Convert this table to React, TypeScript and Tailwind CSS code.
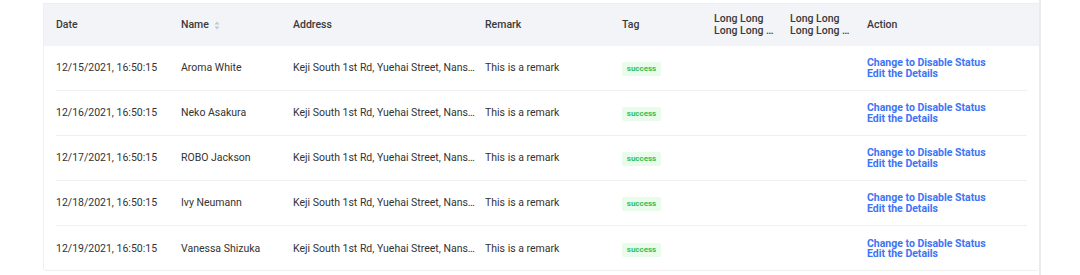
const rows = [
  { date: "12/15/2021, 16:50:15", name: "Aroma White" },
  { date: "12/16/2021, 16:50:15", name: "Neko Asakura" },
  { date: "12/17/2021, 16:50:15", name: "ROBO Jackson" },
  { date: "12/18/2021, 16:50:15", name: "Ivy Neumann" },
  { date: "12/19/2021, 16:50:15", name: "Vanessa Shizuka" },
];

const SortIcon = () => (
  <svg width="6" height="9" viewBox="0 0 6 9" className="ml-[5px]">
    <path d="M3 0.5 L5.5 3.5 L0.5 3.5 Z" fill="#c4c7cf" />
    <path d="M3 8.5 L5.5 5.5 L0.5 5.5 Z" fill="#c4c7cf" />
  </svg>
);

export default function App() {
  return (
    <div
      className="w-[1080px] h-[275px] bg-white pl-[43px] text-[10.5px] text-[#333]"
      style={{ fontFamily: "Roboto, 'Liberation Sans', sans-serif" }}
    >
      <div className="w-[998px] h-full border-r-2 border-[#ebebeb] pt-[3px]">
        <div className="h-[268px] border border-r-0 border-[#efefef] rounded-b-[4px] bg-white">
          {/* header */}
          <div className="h-[42px] bg-[#f3f4f7] flex items-center px-[12px] font-medium text-[#3a3a3a]">
            <div className="w-[125px]">Date</div>
            <div className="w-[112px] flex items-center">
              Name
              <SortIcon />
            </div>
            <div className="w-[192px]">Address</div>
            <div className="w-[137px]">Remark</div>
            <div className="w-[92px]">Tag</div>
            <div className="w-[76px] leading-[12px]">
              <div>Long Long</div>
              <div className="w-[60px] truncate">Long Long Long Long</div>
            </div>
            <div className="w-[77px] leading-[12px]">
              <div>Long Long</div>
              <div className="w-[60px] truncate">Long Long Long Long</div>
            </div>
            <div className="w-[160px]">Action</div>
          </div>
          {/* body */}
          <div className="px-[12px]">
            {rows.map((r, i) => (
              <div
                key={r.date}
                className={
                  "h-[45px] flex items-center " +
                  (i < rows.length - 1 ? "border-b border-[#f0f0f0]" : "")
                }
              >
                <div className="w-[125px]">{r.date}</div>
                <div className="w-[112px]">{r.name}</div>
                <div className="w-[192px] pr-[10px]">
                  <div className="truncate">
                    Keji South 1st Rd, Yuehai Street, Nanshan District, Shenzhen
                  </div>
                </div>
                <div className="w-[137px]">This is a remark</div>
                <div className="w-[92px]">
                  <span className="inline-flex items-center justify-center w-[39px] h-[14px] bg-[#e9fbea] text-[#35c05a] text-[8px] font-bold rounded-[2px]">
                    success
                  </span>
                </div>
                <div className="w-[76px]" />
                <div className="w-[77px]" />
                <div className="w-[160px] flex flex-col leading-[10.5px] font-bold text-[#3d74f6] pt-[1px]">
                  <span>Change to Disable Status</span>
                  <span>Edit the Details</span>
                </div>
              </div>
            ))}
          </div>
        </div>
      </div>
    </div>
  );
}
